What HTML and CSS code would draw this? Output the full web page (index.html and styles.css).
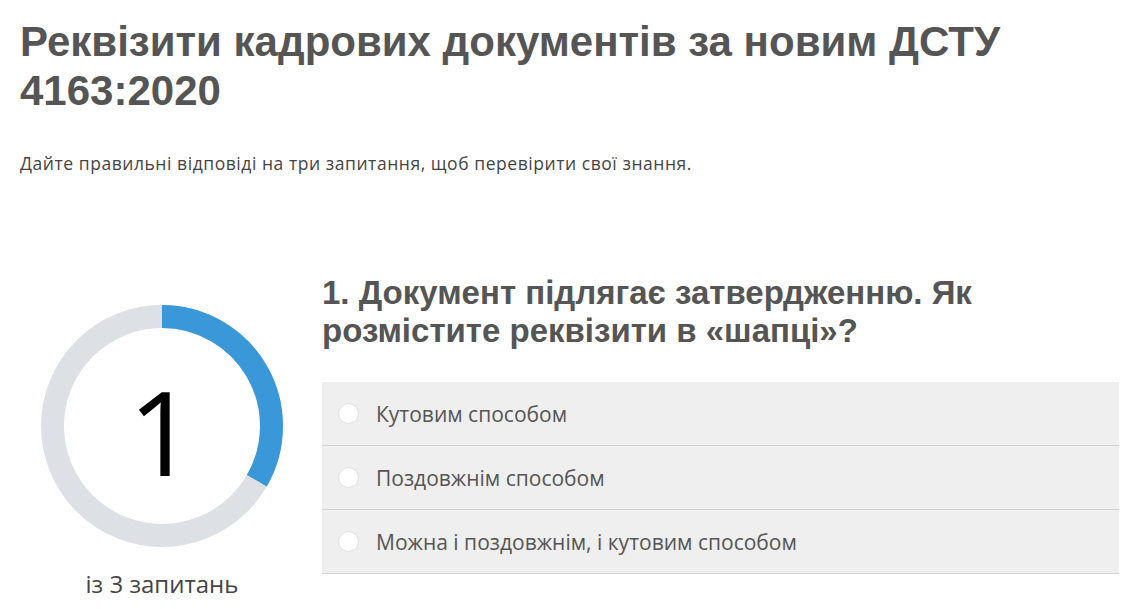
FILE: index.html
```html
<!DOCTYPE html>
<html lang="uk">
<head>
<meta charset="utf-8">
<link rel="stylesheet" href="styles.css">
</head>
<body>
<main class="page">
  <h1 class="title">Реквізити кадрових документів за новим ДСТУ 4163:2020</h1>
  <p class="lead">Дайте правильні відповіді на три запитання, щоб перевірити свої знання.</p>
  <section class="quiz">
    <div class="progress">
      <div class="ring">
        <svg viewBox="0 0 242 242" width="242" height="242">
          <circle cx="121" cy="121" r="109.5" fill="none" stroke="#dde1e5" stroke-width="23"/>
          <path d="M121 11.5 A109.5 109.5 0 0 1 215.83 175.75" fill="none" stroke="#3a98d8" stroke-width="23"/>
        </svg>
        <span class="ring-num">1</span>
      </div>
      <div class="progress-label">із 3 запитань</div>
    </div>
    <div class="question">
      <h2 class="q-title">1. Документ підлягає затвердженню. Як розмістите реквізити в «шапці»?</h2>
      <ul class="options">
        <li class="option"><span class="radio"></span><span class="opt-text">Кутовим способом</span></li>
        <li class="option"><span class="radio"></span><span class="opt-text">Поздовжнім способом</span></li>
        <li class="option"><span class="radio"></span><span class="opt-text">Можна і поздовжнім, і кутовим способом</span></li>
      </ul>
    </div>
  </section>
</main>
</body>
</html>
```
FILE: styles.css
```css
* { box-sizing: border-box; }
html, body { margin: 0; padding: 0; background: #fff; }
body { font-family: "Open Sans", "Noto Sans", sans-serif; color: #444; }
.page { padding: 0 20px; width: 1136px; }
.title {
  margin: 0;
  padding-top: 17px;
  font-family: "Liberation Sans", Arial, sans-serif;
  font-weight: 700;
  font-size: 42px;
  line-height: 49px;
  color: #555;
  max-width: 1010px;
}
.lead {
  margin: 36px 0 0;
  font-size: 17.5px;
  letter-spacing: 0.55px;
  line-height: 24px;
  color: #444;
}
.quiz {
  display: flex;
  margin-top: 99px;
}
.progress {
  width: 302px;
  flex: none;
  display: flex;
  flex-direction: column;
  align-items: flex-start;
  padding-top: 31px;
}
.ring {
  position: relative;
  width: 242px;
  height: 242px;
  margin-left: 21px;
}
.ring svg { display: block; }
.ring-num {
  position: absolute;
  inset: 0;
  display: flex;
  align-items: center;
  justify-content: center;
  padding-top: 10px;
  font-weight: 400;
  font-size: 118px;
  color: #000;
  line-height: 1;
}
.progress-label {
  width: 284px;
  text-align: center;
  margin-top: 22px;
  font-size: 24px;
  line-height: 30px;
  color: #444;
}
.question { flex: 1; }
.q-title {
  margin: 0;
  font-family: "Liberation Sans", Arial, sans-serif;
  font-weight: 700;
  font-size: 33px;
  line-height: 38px;
  color: #555;
  max-width: 700px;
}
.options {
  list-style: none;
  margin: 32px 0 0;
  padding: 0;
  width: 797px;
  background: #efefef;
}
.option {
  display: flex;
  align-items: center;
  height: 64px;
  border-bottom: 1px solid #d4d4d4;
  padding-left: 16px;
}
.radio {
  width: 21px;
  height: 21px;
  border-radius: 50%;
  background: #fff;
  border: 1px solid #dedede;
  flex: none;
  margin-right: 17px;
}
.opt-text {
  font-size: 21px;
  color: #555;
}
```
